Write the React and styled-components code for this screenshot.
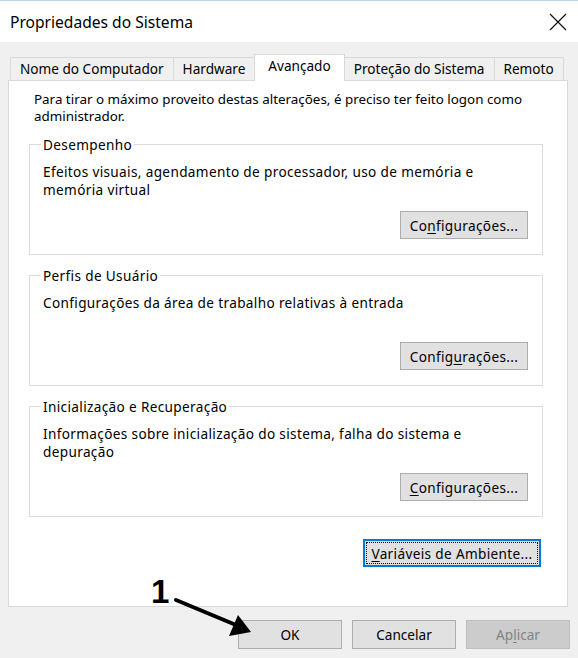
import React from 'react'
import styled, { createGlobalStyle } from 'styled-components'

const GlobalStyle = createGlobalStyle`
  html, body {
    margin: 0;
    padding: 0;
    background: #f0f0f0;
  }
  body {
    font-family: "Noto Sans", "Segoe UI", sans-serif;
    font-size: 13.6px;
    color: #000;
  }
`

const Window = styled.div`
  position: relative;
  width: 578px;
  height: 658px;
  box-sizing: border-box;
  background: #f0f0f0;
  border-top: 1px solid #bcd3ea;
  overflow: hidden;
`

const TitleBar = styled.div`
  height: 41px;
  background: #fff;
  display: flex;
  align-items: center;
  justify-content: space-between;
  padding: 0 11px 0 10px;
`

const Title = styled.div`
  font-size: 15.6px;
  color: #000;
`

const Body = styled.div`
  padding: 12px 10px 0 8px;
`

const TabStrip = styled.div`
  position: relative;
  z-index: 1;
  display: flex;
  align-items: flex-end;
  height: 26px;
  padding-left: 2px;
`

const Tab = styled.div`
  box-sizing: border-box;
  height: ${({ $active }) => ($active ? '27px' : '23px')};
  margin-bottom: ${({ $active }) => ($active ? '-1px' : '0')};
  margin-left: -1px;
  padding: ${({ $active }) => ($active ? '2px 13px 0' : '2px 9px 0')};
  border: 1px solid #d9d9d9;
  border-bottom: none;
  background: ${({ $active }) => ($active ? '#fff' : '#f0f0f0')};
  line-height: 17px;
  white-space: nowrap;
  &:first-child {
    margin-left: 0;
  }
`

const Panel = styled.div`
  box-sizing: border-box;
  height: 527px;
  border: 1px solid #d9d9d9;
  background: #fff;
  padding: 10px 24px 0 20px;
  display: flex;
  flex-direction: column;
`

const Intro = styled.p`
  margin: 0 0 0 5px;
  font-size: 13.4px;
  line-height: 17px;
  white-space: nowrap;
`

const Group = styled.fieldset`
  box-sizing: border-box;
  height: 119px;
  margin: ${({ $first }) => ($first ? '11px' : '12px')} 0 0;
  padding: 10px 14px 0 13px;
  border: 1px solid #dcdcdc;
  min-width: 0;
  letter-spacing: 0.35px;
`

const Legend = styled.legend`
  padding: 0 2px;
  margin-left: -2px;
  line-height: 17px;
`

const GroupBody = styled.div`
  height: 76px;
  display: flex;
  flex-direction: column;
`

const GroupText = styled.div`
  line-height: 18px;
  white-space: nowrap;
`

const Button = styled.button`
  box-sizing: border-box;
  width: ${({ $w }) => $w}px;
  height: ${({ $h }) => $h || 28}px;
  padding: 0;
  border: 1px solid ${({ $disabled }) => ($disabled ? '#bfbfbf' : '#adadad')};
  background: ${({ $disabled }) => ($disabled ? '#cccccc' : '#e1e1e1')};
  color: ${({ $disabled }) => ($disabled ? '#838383' : '#000')};
  font-family: inherit;
  font-size: 13.6px;
  letter-spacing: inherit;
  white-space: nowrap;
`

const GroupButton = styled(Button)`
  margin-top: auto;
  align-self: flex-end;
`

const FocusButton = styled(Button)`
  align-self: flex-end;
  margin: 22px 2px 0 0;
  border: 2px solid #0078d7;
  outline: 1px dotted #000;
  outline-offset: -4px;
  letter-spacing: 0.35px;
`

const Key = styled.span`
  text-decoration: underline;
  text-underline-offset: 2px;
`

const Footer = styled.div`
  display: flex;
  justify-content: flex-end;
  gap: 10px;
  padding: 13px 8px 0;
`

const Overlay = styled.svg`
  position: absolute;
  left: 0;
  top: 0;
  pointer-events: none;
`

const Marker = styled.span`
  position: absolute;
  left: 151px;
  top: 574px;
  font-family: "Liberation Sans", Arial, sans-serif;
  font-weight: bold;
  font-size: 33px;
  line-height: 1;
  color: #000;
`

const CloseIcon = () => (
  <svg width="18" height="18" viewBox="0 0 18 18">
    <path d="M1 1 L17 17 M17 1 L1 17" stroke="#111" strokeWidth="1.2" fill="none" />
  </svg>
)

const tabs = ['Nome do Computador', 'Hardware', 'Avançado', 'Proteção do Sistema', 'Remoto']

const App = () => {
  return (
    <>
      <GlobalStyle />
      <Window>
        <TitleBar>
          <Title>Propriedades do Sistema</Title>
          <CloseIcon />
        </TitleBar>
        <Body>
          <TabStrip>
            {tabs.map((t) => (
              <Tab key={t} $active={t === 'Avançado'}>{t}</Tab>
            ))}
          </TabStrip>
          <Panel>
            <Intro>
              Para tirar o máximo proveito destas alterações, é preciso ter feito logon como<br />administrador.
            </Intro>
            <Group $first>
              <Legend>Desempenho</Legend>
              <GroupBody>
                <GroupText>
                  Efeitos visuais, agendamento de processador, uso de memória e<br />memória virtual
                </GroupText>
                <GroupButton $w={128}>Co<Key>n</Key>figurações...</GroupButton>
              </GroupBody>
            </Group>
            <Group>
              <Legend>Perfis de Usuário</Legend>
              <GroupBody>
                <GroupText>Configurações da área de trabalho relativas à entrada</GroupText>
                <GroupButton $w={128}>Config<Key>u</Key>rações...</GroupButton>
              </GroupBody>
            </Group>
            <Group>
              <Legend>Inicialização e Recuperação</Legend>
              <GroupBody>
                <GroupText>
                  Informações sobre inicialização do sistema, falha do sistema e<br />depuração
                </GroupText>
                <GroupButton $w={128}><Key>C</Key>onfigurações...</GroupButton>
              </GroupBody>
            </Group>
            <FocusButton $w={178}><Key>V</Key>ariáveis de Ambiente...</FocusButton>
          </Panel>
        </Body>
        <Footer>
          <Button $w={104} $h={29}>OK</Button>
          <Button $w={104} $h={29}>Cancelar</Button>
          <Button $w={104} $h={29} $disabled>Ap<Key>l</Key>icar</Button>
        </Footer>
        <Marker>1</Marker>
        <Overlay width="578" height="658" viewBox="0 0 578 658">
          <path d="M176 599 L236 624" stroke="#000" strokeWidth="4" strokeLinecap="round" />
          <polygon points="251,631 229,635 238,614" fill="#000" />
        </Overlay>
      </Window>
    </>
  )
}

export default App
